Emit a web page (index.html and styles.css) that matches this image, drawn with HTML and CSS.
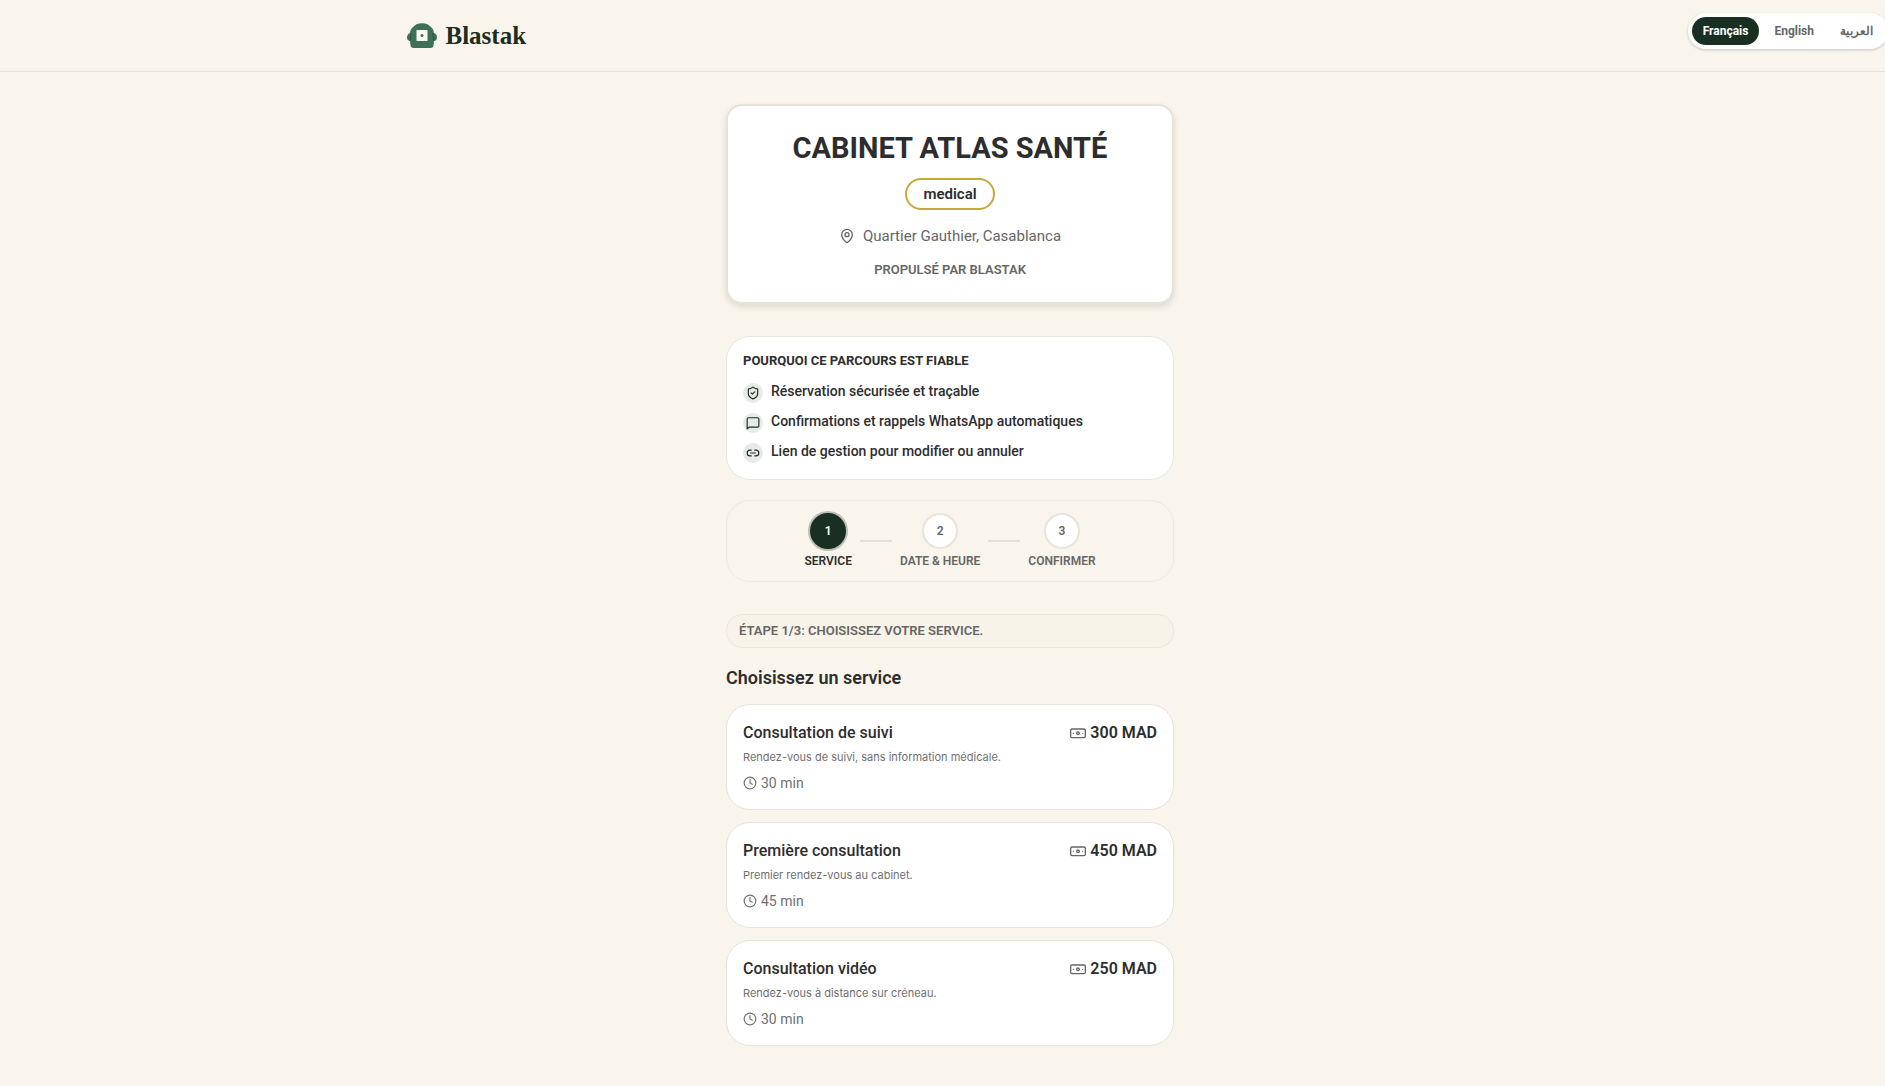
FILE: index.html
```
<!DOCTYPE html>
<html lang="fr">
<head>
  <meta charset="UTF-8" />
  <meta name="viewport" content="width=device-width, initial-scale=1.0"/>
  <title>Cabinet Atlas Santé</title>
  <link rel="stylesheet" href="styles.css">
</head>
<body>

  <header class="site-header">
    <div class="header-inner">
      <a class="brand" href="#">
        <svg class="brand-logo" viewBox="0 0 32 32" aria-hidden="true">
          <path d="M10 4.500 Q16 2 22 4.500 L26 8 Q28 10 28 13 Q31 14 31 17.500 Q31 20.500 28 21 L27.500 25.500 Q27 28 24 28 H8 Q5 28 4.500 25.500 L4 21 Q1 20.500 1 17.500 Q1 14 4 13 Q4 10 6 8 Z" fill="#3d7055"/>
          <path d="M4 21 Q5 17 5 13 M28 21 Q27 17 27 13" stroke="#2c5641" stroke-width="1" fill="none"/>
          <rect x="10.500" y="10" width="11" height="11" fill="#fbfaf2"/>
          <circle cx="16" cy="15.500" r="1.500" fill="#3d7055"/>
        </svg>
        <span>Blastak</span>
      </a>
    </div>
    <div class="lang-switch">
      <button class="lang active" type="button">Français</button>
      <button class="lang" type="button">English</button>
      <button class="lang" type="button" lang="ar">العربية</button>
    </div>
  </header>

  <div class="page">
  <main class="booking">
    <section class="business-card">
      <h1>CABINET ATLAS SANTÉ</h1>
      <span class="badge">medical</span>
      <p class="location">
        <svg class="icon" viewBox="0 0 24 24" aria-hidden="true"><path d="M20 10c0 5-5.500 10.200-7.400 11.800a1 1 0 0 1-1.200 0C9.500 20.200 4 15 4 10a8 8 0 0 1 16 0"/><circle cx="12" cy="10" r="3"/></svg>
        Quartier Gauthier, Casablanca
      </p>
      <p class="powered">PROPULSÉ PAR BLASTAK</p>
    </section>

    <section class="trust-card">
      <h2>POURQUOI CE PARCOURS EST FIABLE</h2>
      <ul>
        <li>
          <span class="trust-icon"><svg class="icon" viewBox="0 0 24 24" aria-hidden="true"><path d="M20 13c0 5-3.500 7.500-7.700 9a1 1 0 0 1-.6 0C7.500 20.500 4 18 4 13V6a1 1 0 0 1 1-1c2 0 4.500-1.200 6.200-2.700a1.200 1.200 0 0 1 1.600 0C14.500 3.800 17 5 19 5a1 1 0 0 1 1 1z"/><path d="m9 12 2 2 4-4"/></svg></span>
          Réservation sécurisée et traçable
        </li>
        <li>
          <span class="trust-icon"><svg class="icon" viewBox="0 0 24 24" aria-hidden="true"><path d="M22 17a2 2 0 0 1-2 2H6l-4 3V5a2 2 0 0 1 2-2h16a2 2 0 0 1 2 2z"/></svg></span>
          Confirmations et rappels WhatsApp automatiques
        </li>
        <li>
          <span class="trust-icon"><svg class="icon" viewBox="0 0 24 24" aria-hidden="true"><path d="M9 17H7A5 5 0 0 1 7 7h2M15 7h2a5 5 0 0 1 0 10h-2M8 12h8"/></svg></span>
          Lien de gestion pour modifier ou annuler
        </li>
      </ul>
    </section>

    <ol class="steps">
      <li class="step current"><span class="step-number">1</span>SERVICE</li>
      <li class="step-line" aria-hidden="true"></li>
      <li class="step"><span class="step-number">2</span>DATE &amp; HEURE</li>
      <li class="step-line" aria-hidden="true"></li>
      <li class="step"><span class="step-number">3</span>CONFIRMER</li>
    </ol>

    <p class="step-hint">ÉTAPE 1/3: CHOISISSEZ VOTRE SERVICE.</p>

    <section class="services">
      <h2>Choisissez un service</h2>

      <button class="service" type="button">
        <span class="service-top">
          <span class="service-name">Consultation de suivi</span>
          <span class="service-price"><svg class="icon" viewBox="0 0 24 24" aria-hidden="true"><rect x="1" y="6" width="22" height="13" rx="2"/><circle cx="12" cy="12.500" r="2"/><path d="M5 12.500h.01M19 12.500h.01"/></svg>300 MAD</span>
        </span>
        <span class="service-desc">Rendez-vous de suivi, sans information médicale.</span>
        <span class="service-time"><svg class="icon" viewBox="0 0 24 24" aria-hidden="true"><circle cx="12" cy="12" r="10"/><path d="M12 6v6l4 2"/></svg>30 min</span>
      </button>

      <button class="service" type="button">
        <span class="service-top">
          <span class="service-name">Première consultation</span>
          <span class="service-price"><svg class="icon" viewBox="0 0 24 24" aria-hidden="true"><rect x="1" y="6" width="22" height="13" rx="2"/><circle cx="12" cy="12.500" r="2"/><path d="M5 12.500h.01M19 12.500h.01"/></svg>450 MAD</span>
        </span>
        <span class="service-desc">Premier rendez-vous au cabinet.</span>
        <span class="service-time"><svg class="icon" viewBox="0 0 24 24" aria-hidden="true"><circle cx="12" cy="12" r="10"/><path d="M12 6v6l4 2"/></svg>45 min</span>
      </button>

      <button class="service" type="button">
        <span class="service-top">
          <span class="service-name">Consultation vidéo</span>
          <span class="service-price"><svg class="icon" viewBox="0 0 24 24" aria-hidden="true"><rect x="1" y="6" width="22" height="13" rx="2"/><circle cx="12" cy="12.500" r="2"/><path d="M5 12.500h.01M19 12.500h.01"/></svg>250 MAD</span>
        </span>
        <span class="service-desc">Rendez-vous à distance sur créneau.</span>
        <span class="service-time"><svg class="icon" viewBox="0 0 24 24" aria-hidden="true"><circle cx="12" cy="12" r="10"/><path d="M12 6v6l4 2"/></svg>30 min</span>
      </button>
    </section>
  </main>
  </div>

</body>
</html>
```
FILE: styles.css
```
* {
  box-sizing: border-box;
}

body {
  margin: 0;
  min-height: 100vh;
  overflow-x: hidden;
  background-color: #f9f5ec;
  color: #2d2d2d;
  font-family: Roboto, "Noto Sans", sans-serif;
  font-size: 14px;
  line-height: 20px;
}

h1, h2, p, ul, ol {
  margin: 0;
  padding: 0;
}

ul, ol {
  list-style: none;
}

button {
  font-family: inherit;
  color: inherit;
  cursor: pointer;
}

.icon {
  width: 16px;
  height: 16px;
  flex-shrink: 0;
  fill: none;
  stroke: currentColor;
  stroke-width: 2;
  stroke-linecap: round;
  stroke-linejoin: round;
}

/* header */
.site-header {
  position: relative;
  padding-left: 14px;
  border-bottom: 1px solid #e5e1d8;
}

.header-inner {
  display: flex;
  align-items: center;
  max-width: 1088px;
  height: 71px;
  margin: 0 auto;
}

.brand {
  display: flex;
  align-items: center;
  gap: 8px;
  color: #1b2e22;
  font-family: "Liberation Serif", serif;
  font-size: 25px;
  font-weight: bold;
  line-height: 32px;
  text-decoration: none;
}

.brand-logo {
  width: 32px;
  height: 32px;
}

.lang-switch {
  position: absolute;
  top: 13px;
  right: -3px;
  display: flex;
  gap: 4px;
  padding: 4px;
  border-radius: 20px;
  background-color: #fff;
  box-shadow: 0 1px 3px rgba(0, 0, 0, 0.2);
}

.lang {
  height: 28px;
  padding: 0 11px;
  border: none;
  border-radius: 14px;
  background: none;
  color: #666;
  font-size: 12px;
  font-weight: 700;
}

.lang.active {
  background-color: #1a2f23;
  color: #fff;
}

/* page column */
.page {
  padding: 32px 0 40px 15px;
}

.booking {
  display: flex;
  flex-direction: column;
  max-width: 448px;
  margin: 0 auto;
}

.business-card {
  display: flex;
  flex-direction: column;
  align-items: center;
  padding: 22px;
  border: 2px solid #e8e3da;
  border-radius: 16px;
  background-color: #fff;
  box-shadow: 0 3px 6px rgba(60, 50, 20, 0.14);
}

.business-card h1 {
  font-size: 29px;
  line-height: 40px;
}

.badge {
  margin: 10px 0 16px;
  padding: 4px 16px;
  border: 2px solid #c5a93d;
  border-radius: 16px;
  font-size: 15px;
  font-weight: 600;
}

.location {
  display: flex;
  align-items: center;
  gap: 8px;
  color: #666;
  font-size: 15px;
}

.powered {
  margin-top: 14px;
  color: #666;
  font-size: 13px;
  font-weight: 600;
}

.trust-card {
  margin-top: 32px;
  padding: 16px;
  border: 1px solid #e8e6df;
  border-radius: 24px;
  background-color: #fff;
}

.trust-card h2 {
  font-size: 13px;
  line-height: 16px;
}

.trust-card ul {
  display: flex;
  flex-direction: column;
  gap: 8px;
  margin-top: 12px;
}

.trust-card li {
  display: flex;
  gap: 8px;
  line-height: 20px;
  font-weight: 500;
}

.trust-icon {
  display: flex;
  align-items: center;
  justify-content: center;
  width: 20px;
  height: 20px;
  margin-top: 2px;
  border-radius: 50%;
  background-color: #e8eae8;
  color: #1a2f23;
}

.trust-icon .icon {
  width: 14px;
  height: 14px;
}

/* progress */
.steps {
  display: flex;
  align-items: center;
  justify-content: center;
  gap: 8px;
  margin-top: 20px;
  padding: 12px;
  border: 1px solid #eeeae0;
  border-radius: 24px;
}

.step {
  display: flex;
  flex-direction: column;
  align-items: center;
  gap: 4px;
  color: #666;
  font-size: 12px;
  font-weight: 600;
  line-height: 16px;
}

.step-number {
  display: flex;
  align-items: center;
  justify-content: center;
  width: 36px;
  height: 36px;
  border: 2px solid #e8e4da;
  border-radius: 50%;
  background-color: #fff;
}

.step.current {
  color: #2d2d2d;
}

.step.current .step-number {
  border-color: #1a2f23;
  background-color: #1a2f23;
  box-shadow: 0 0 0 2px #b9bfb5;
  color: #fff;
}

.step-line {
  width: 32px;
  height: 2px;
  background-color: #e5e1d7;
}

.step-hint {
  margin-top: 32px;
  padding: 8px 12px;
  border: 1px solid #ebe7dd;
  border-radius: 16px;
  background-color: #f7f3e8;
  color: #666;
  font-size: 13px;
  font-weight: 600;
  line-height: 16px;
}

/* services */
.services {
  display: flex;
  flex-direction: column;
  gap: 12px;
  margin-top: 16px;
}

.services h2 {
  font-size: 18px;
  font-weight: 600;
  line-height: 28px;
}

.service {
  display: flex;
  flex-direction: column;
  padding: 16px;
  border: 1px solid #e8e3da;
  border-radius: 24px;
  background-color: #fff;
  text-align: left;
}

.service-top {
  display: flex;
  align-items: center;
  justify-content: space-between;
  align-self: stretch;
  font-size: 16px;
  line-height: 24px;
}

.service-name {
  font-weight: 500;
}

.service-price {
  display: flex;
  align-items: center;
  gap: 4px;
  font-weight: 600;
}

.service-price .icon {
  color: #666;
}

.service-desc {
  margin: 4px 0 8px;
  color: #6f6f6f;
  font-family: Inter, sans-serif;
  font-size: 11px;
  line-height: 16px;
}

.service-time {
  display: flex;
  align-items: center;
  gap: 4px;
  color: #6f6f6f;
  font-size: 14px;
  line-height: 20px;
}

.service-time .icon {
  width: 14px;
  height: 14px;
}
```
